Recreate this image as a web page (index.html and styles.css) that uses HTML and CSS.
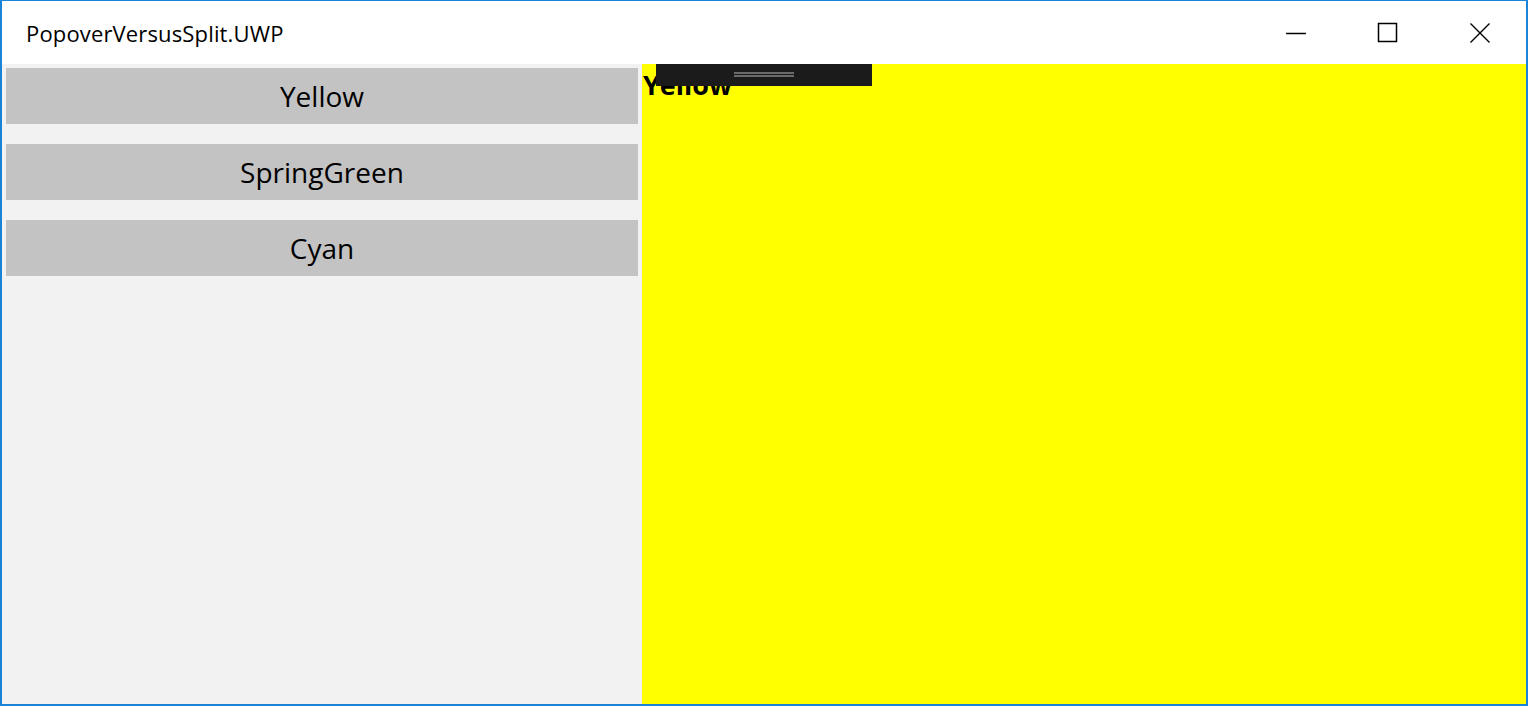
FILE: index.html
```html
<!DOCTYPE html>
<html>
<head>
<meta charset="utf-8">
<link rel="stylesheet" href="styles.css">
</head>
<body>
<div class="window">
  <div class="titlebar">
    <div class="title">PopoverVersusSplit.UWP</div>
    <div class="caption-buttons">
      <div class="cap-btn">
        <svg width="22" height="22" viewBox="0 0 22 22"><line x1="1" y1="11.5" x2="21" y2="11.5" stroke="#000" stroke-width="1.5"/></svg>
      </div>
      <div class="cap-btn">
        <svg width="22" height="22" viewBox="0 0 22 22"><rect x="1.5" y="1.5" width="18" height="18" fill="none" stroke="#000" stroke-width="1.5"/></svg>
      </div>
      <div class="cap-btn">
        <svg width="22" height="22" viewBox="0 0 22 22"><path d="M1.5 1.5 L20.5 20.5 M20.5 1.5 L1.5 20.5" stroke="#000" stroke-width="1.4" fill="none"/></svg>
      </div>
    </div>
  </div>
  <div class="content">
    <div class="pane">
      <div class="btn">Yellow</div>
      <div class="btn">SpringGreen</div>
      <div class="btn">Cyan</div>
    </div>
    <div class="detail">
      <div class="label">Yellow</div>
      <div class="grip"><span class="grip-lines"></span></div>
    </div>
  </div>
</div>
</body>
</html>
```
FILE: styles.css
```css
html, body {
  margin: 0;
  padding: 0;
  background: #fff;
}
.window {
  width: 1528px;
  height: 706px;
  box-sizing: border-box;
  border: 2px solid #1883d7;
  border-top-width: 1px;
  display: flex;
  flex-direction: column;
  font-family: "Open Sans", "Noto Sans", sans-serif;
}
.titlebar {
  height: 63px;
  display: flex;
  align-items: center;
  justify-content: space-between;
  background: #fff;
}
.title {
  padding-left: 24px;
  font-size: 22px;
  letter-spacing: 0.15px;
  color: #000;
}
.caption-buttons {
  display: flex;
  height: 100%;
}
.cap-btn {
  width: 92px;
  display: flex;
  align-items: center;
  justify-content: center;
}
.content {
  flex: 1;
  display: flex;
  min-height: 0;
}
.pane {
  width: 640px;
  background: #f2f2f2;
  box-sizing: border-box;
  padding: 4px 4px;
  display: flex;
  flex-direction: column;
  gap: 20px;
}
.btn {
  height: 56px;
  background: #c3c3c3;
  display: flex;
  align-items: center;
  justify-content: center;
  font-size: 28px;
  color: #000;
}
.detail {
  flex: 1;
  background: #ffff00;
  position: relative;
}
.label {
  font-weight: bold;
  font-size: 27px;
  line-height: 30px;
  padding-top: 6px;
  padding-left: 1px;
  color: #000;
}
.grip {
  position: absolute;
  left: 14px;
  top: 0;
  width: 216px;
  height: 22px;
  background: #1b1b1b;
}
.grip-lines {
  position: absolute;
  left: 78px;
  top: 8px;
  width: 60px;
  height: 5px;
  border-top: 2px solid #6a6a6a;
  border-bottom: 2px solid #6a6a6a;
  box-sizing: border-box;
}
```
